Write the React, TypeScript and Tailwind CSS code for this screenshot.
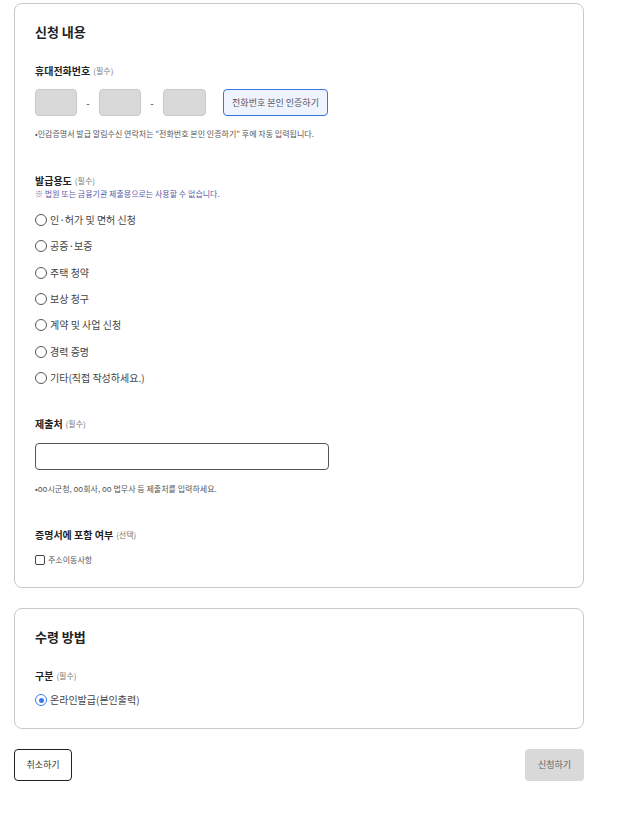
const purposes = [
  "인·허가 및 면허 신청",
  "공증·보증",
  "주택 청약",
  "보상 청구",
  "계약 및 사업 신청",
  "경력 증명",
  "기타(직접 작성하세요.)",
];

function Label({ text, tag }: { text: string; tag: string }) {
  return (
    <div className="flex h-[14px] items-center gap-[3px] overflow-hidden leading-[14px]">
      <span className="text-[10px] font-bold text-[#222]">{text}</span>
      <span className="text-[8px] text-[#777]">{tag}</span>
    </div>
  );
}

function Radio({ label, checked = false }: { label: string; checked?: boolean }) {
  return (
    <div className="flex items-center gap-[3px]">
      {checked ? (
        <span className="flex h-[12px] w-[12px] items-center justify-center rounded-full border-[1.5px] border-[#3b7be8]">
          <span className="h-[5px] w-[5px] rounded-full bg-[#3b7be8]" />
        </span>
      ) : (
        <span className="h-[12px] w-[12px] rounded-full border-[1.5px] border-[#555]" />
      )}
      <span className="text-[10px] leading-[14px] text-[#444]">{label}</span>
    </div>
  );
}

export default function App() {
  return (
    <div
      className="ml-[14px] w-[570px] bg-white pt-[3px] text-[#222]"
      style={{ fontFamily: '"Noto Sans CJK KR", "Noto Sans", sans-serif' }}
    >
      {/* 신청 내용 */}
      <section className="rounded-lg border border-[#c9c9c9] px-5 pb-5 pt-[19px]">
        <h2 className="text-[13px] font-bold leading-[18px]">신청 내용</h2>

        <div className="mt-[23px]">
          <Label text="휴대전화번호" tag="(필수)" />
        </div>
        <div className="mt-[11px] flex h-[27px] items-center">
          <div className="h-[27px] w-[42px] rounded border border-[#c8c8c8] bg-[#d9d9d9]" />
          <span className="w-[22px] text-center text-[10px] text-[#444]">-</span>
          <div className="h-[27px] w-[42px] rounded border border-[#c8c8c8] bg-[#d9d9d9]" />
          <span className="w-[22px] text-center text-[10px] text-[#444]">-</span>
          <div className="h-[27px] w-[43px] rounded border border-[#c8c8c8] bg-[#d9d9d9]" />
          <button className="ml-[17px] h-[27px] w-[105px] rounded border border-[#3b73e0] bg-[#eef3fd] text-[9px] text-[#556]">
            전화번호 본인 인증하기
          </button>
        </div>
        <p className="mt-[12px] h-[12px] text-[8px] leading-[12px] text-[#555]">
          •인감증명서 발급 알림수신 연락처는 "전화번호 본인 인증하기" 후에 자동 입력됩니다.
        </p>

        <div className="mt-[34px]">
          <Label text="발급용도" tag="(필수)" />
        </div>
        <p className="h-[12px] text-[8px] leading-[12px] text-[#5b5ba8]">
          ※ 법원 또는 금융기관 제출용으로는 사용할 수 없습니다.
        </p>
        <div className="mt-[7px] flex flex-col">
          {purposes.map((p) => (
            <div key={p} className="flex h-[26.3px] items-center">
              <Radio label={p} />
            </div>
          ))}
        </div>

        <div className="mt-[26px]">
          <Label text="제출처" tag="(필수)" />
        </div>
        <input className="mt-[12px] block h-[27px] w-[294px] rounded border border-[#555] bg-white" />
        <p className="mt-[13px] h-[12px] text-[8px] leading-[12px] text-[#555]">
          •oo시군청, oo회사, oo 법무사 등 제출처를 입력하세요.
        </p>

        <div className="mt-[33px]">
          <Label text="증명서에 포함 여부" tag="(선택)" />
        </div>
        <div className="mt-[11px] flex h-[14px] items-center gap-[3px]">
          <span className="h-[10px] w-[10px] rounded-[2px] border border-[#444]" />
          <span className="text-[8px] leading-[14px] text-[#555]">주소이동사항</span>
        </div>
      </section>

      {/* 수령 방법 */}
      <section className="mt-[20px] rounded-lg border border-[#c9c9c9] px-5 pb-[21px] pt-[19px]">
        <h2 className="text-[13px] font-bold leading-[18px]">수령 방법</h2>
        <div className="mt-[23px]">
          <Label text="구분" tag="(필수)" />
        </div>
        <div className="mt-[10px] flex h-[14px] items-center">
          <Radio label="온라인발급(본인출력)" checked />
        </div>
      </section>

      <div className="mt-[20px] flex justify-between">
        <button className="h-[32px] w-[58px] rounded border border-[#222] bg-white text-[9px] text-[#333]">
          취소하기
        </button>
        <button className="h-[32px] w-[59px] rounded bg-[#d9d9d9] text-[9px] text-[#666]">
          신청하기
        </button>
      </div>
    </div>
  );
}
